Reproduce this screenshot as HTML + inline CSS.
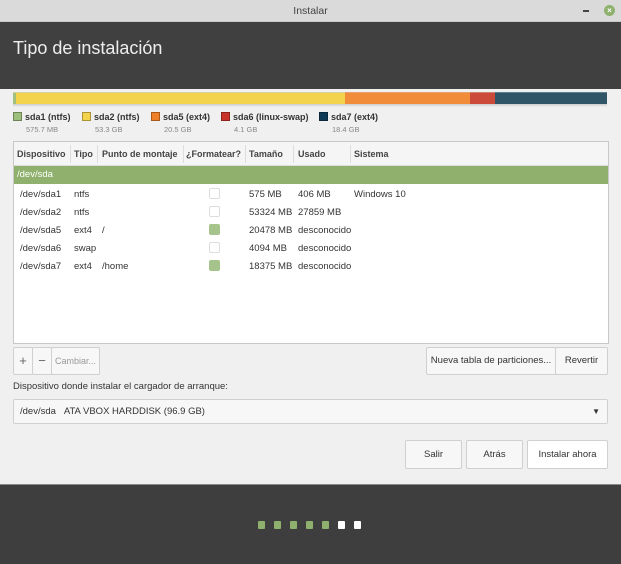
<!DOCTYPE html>
<html><head><meta charset="utf-8"><style>
*{margin:0;padding:0;box-sizing:border-box}
body{width:621px;height:564px;overflow:hidden;background:#f0f0f0;font-family:"Liberation Sans",sans-serif;font-size:9.5px;color:#333;position:relative}
.a{position:absolute}
.tb{left:0;top:0;width:621px;height:22px;background:#dadada;text-align:center;line-height:22px;font-size:10.5px;color:#444;border-bottom:1px solid #c8c8c8}
.hd{left:0;top:22px;width:621px;height:67px;background:#404040;color:#eee;font-size:18px;padding:16px 0 0 13px}
.bar{top:92px;height:12px;border-top:1px solid #d8d0a0}
.lg{top:112px;font-size:9px;color:#333;white-space:nowrap}
.lg i{display:inline-block;width:9px;height:9px;margin-right:3px;vertical-align:-1px;border:1px solid rgba(0,0,0,.3)}
.lg s{display:block;text-decoration:none;color:#888;font-size:7.5px;padding-left:13px;margin-top:3px}
.tbl{left:13px;top:141px;width:596px;height:203px;background:#fff;border:1px solid #c8c8c8}
.th{top:0;height:24px;width:594px;background:#f5f5f5;border-bottom:1px solid #ddd;font-weight:bold;color:#444;font-size:9px;white-space:nowrap}
.th span{position:absolute;top:7px}
.sep{position:absolute;top:3px;width:1px;height:18px;background:#ddd}
.gr{top:24px;height:18px;width:594px;background:#8fb16d;color:#fff;padding:3px 0 0 3px;font-size:9.5px}
.r{font-size:9.5px;color:#333;white-space:nowrap}
.cb{width:11px;height:11px;border:1px solid #ddd;border-radius:2px;background:#fff}
.cb.on{background:#a5c38a;border-color:#a5c38a}
.btn{background:#f7f7f7;border:1px solid #d0d0d0;border-radius:2px;text-align:center;color:#333;font-size:9.5px;white-space:nowrap}
.dot{top:521px;width:7px;height:8px;border-radius:1px}
</style></head><body>
<div class="a tb">Instalar</div>
<div class="a" style="left:583px;top:10px;width:6px;height:2px;background:#444"></div>
<div class="a" style="left:604px;top:5px;width:11px;height:11px;border-radius:50%;background:#8fb16d;color:#fff;font-size:8px;line-height:11px;text-align:center;font-weight:bold">×</div>
<div class="a hd">Tipo de instalación</div>

<div class="a bar" style="left:13px;width:3px;background:#a2c07e"></div>
<div class="a bar" style="left:16px;width:329px;background:#f2d34b"></div>
<div class="a bar" style="left:345px;width:125px;background:#f08c3a;border-top-color:#e8a070"></div>
<div class="a bar" style="left:470px;width:25px;background:#cb4a3a;border-top-color:#d08070"></div>
<div class="a bar" style="left:495px;width:112px;background:#2f5567;border-top-color:#608090"></div>
<div class="a" style="left:13px;top:104px;width:594px;height:3px;background:linear-gradient(#ccc,#f0f0f0)"></div>

<div class="a lg" style="left:13px"><i style="background:#9dbf7c"></i><b>sda1 (ntfs)</b><s>575.7 MB</s></div>
<div class="a lg" style="left:82px"><i style="background:#f2d34b"></i><b>sda2 (ntfs)</b><s>53.3 GB</s></div>
<div class="a lg" style="left:151px"><i style="background:#f07f2a"></i><b>sda5 (ext4)</b><s>20.5 GB</s></div>
<div class="a lg" style="left:221px"><i style="background:#c8332a"></i><b>sda6 (linux-swap)</b><s>4.1 GB</s></div>
<div class="a lg" style="left:319px"><i style="background:#0f3a55"></i><b>sda7 (ext4)</b><s>18.4 GB</s></div>

<div class="a tbl">
<div class="a th">
<span style="left:3px">Dispositivo</span><div class="sep" style="left:56px"></div>
<span style="left:60px">Tipo</span><div class="sep" style="left:83px"></div>
<span style="left:88px">Punto de montaje</span><div class="sep" style="left:169px"></div>
<span style="left:172px">¿Formatear?</span><div class="sep" style="left:231px"></div>
<span style="left:235px">Tamaño</span><div class="sep" style="left:279px"></div>
<span style="left:284px">Usado</span><div class="sep" style="left:336px"></div>
<span style="left:340px">Sistema</span>
</div>
<div class="a gr">/dev/sda</div>
</div>
<div class="a r" style="left:20px;top:186px;line-height:18px">/dev/sda1<br>/dev/sda2<br>/dev/sda5<br>/dev/sda6<br>/dev/sda7</div>
<div class="a r" style="left:74px;top:186px;line-height:18px">ntfs<br>ntfs<br>ext4<br>swap<br>ext4</div>
<div class="a r" style="left:102px;top:186px;line-height:18px">&nbsp;<br>&nbsp;<br>/<br>&nbsp;<br>/home</div>
<div class="a r" style="left:249px;top:186px;line-height:18px">575 MB<br>53324 MB<br>20478 MB<br>4094 MB<br>18375 MB</div>
<div class="a r" style="left:298px;top:186px;line-height:18px">406 MB<br>27859 MB<br>desconocido<br>desconocido<br>desconocido</div>
<div class="a r" style="left:354px;top:186px;line-height:18px">Windows 10</div>
<div class="a cb" style="left:209px;top:188px"></div>
<div class="a cb" style="left:209px;top:206px"></div>
<div class="a cb on" style="left:209px;top:224px"></div>
<div class="a cb" style="left:209px;top:242px"></div>
<div class="a cb on" style="left:209px;top:260px"></div>

<div class="a btn" style="left:13px;top:347px;width:20px;height:28px;line-height:26px;font-size:13px;color:#666">+</div>
<div class="a btn" style="left:32px;top:347px;width:20px;height:28px;line-height:26px;font-size:13px;color:#666">−</div>
<div class="a btn" style="left:51px;top:347px;width:49px;height:28px;line-height:26px;color:#999;font-size:9px">Cambiar...</div>
<div class="a btn" style="left:426px;top:347px;width:130px;height:28px;line-height:26px">Nueva tabla de particiones...</div>
<div class="a btn" style="left:555px;top:347px;width:53px;height:28px;line-height:26px">Revertir</div>
<div class="a" style="left:13px;top:381px;font-size:9.5px">Dispositivo donde instalar el cargador de arranque:</div>
<div class="a btn" style="left:13px;top:399px;width:595px;height:25px;text-align:left;padding-left:6px;line-height:23px">/dev/sda&nbsp;&nbsp;&nbsp;ATA VBOX HARDDISK (96.9 GB)<span style="position:absolute;right:7px;font-size:8px">▼</span></div>
<div class="a btn" style="left:405px;top:440px;width:57px;height:29px;line-height:27px">Salir</div>
<div class="a btn" style="left:466px;top:440px;width:57px;height:29px;line-height:27px">Atrás</div>
<div class="a btn" style="left:527px;top:440px;width:81px;height:29px;line-height:27px;background:#fff">Instalar ahora</div>

<div class="a" style="left:0;top:484px;width:621px;height:80px;background:#3e3e3e;border-top:1px solid #888"></div>
<div class="a dot" style="left:258px;background:#8fb16d"></div>
<div class="a dot" style="left:274px;background:#8fb16d"></div>
<div class="a dot" style="left:290px;background:#8fb16d"></div>
<div class="a dot" style="left:306px;background:#8fb16d"></div>
<div class="a dot" style="left:322px;background:#8fb16d"></div>
<div class="a dot" style="left:338px;background:#fff"></div>
<div class="a dot" style="left:354px;background:#fff"></div>
</body></html>
